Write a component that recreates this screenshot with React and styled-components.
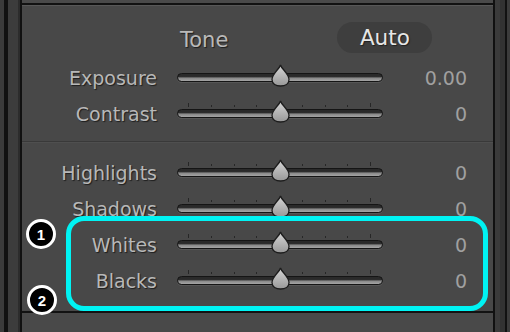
import React from "react";
import styled, { createGlobalStyle } from "styled-components";

const Global = createGlobalStyle`
  html, body { margin: 0; padding: 0; background: #3b3b3b; overflow: hidden; }
  body { font-family: "DejaVu Sans", "Liberation Sans", sans-serif; }
`;

const Frame = styled.div`
  position: relative;
  display: flex;
  width: 510px;
  height: 332px;
`;

const LeftRail = styled.div`
  width: 22px;
  background: linear-gradient(to right,
    #3b3b3b 0 4px, #111 4px 8px, #3c3c3c 8px 18px, #2c2c2c 18px 20px, #111 20px 22px);
`;

const RightRail = styled.div`
  width: 17px;
  background: linear-gradient(to right,
    #111 0 2px, #3b3b3b 2px 7px, #323232 7px 12px, #111 12px 14px, #3b3b3b 14px 17px);
`;

const Main = styled.div`
  flex: 1;
  display: flex;
  flex-direction: column;
  background: #494949;
`;

const TopStrip = styled.div`
  height: 3px;
  background: #4a4a4a;
`;

const Panel = styled.div`
  border-top: 2px solid #121212;
  border-bottom: 2px solid #121212;
  background: #484848;
  box-shadow: inset 0 1px 0 #585858;
`;

const Section = styled.div`
  display: flex;
  flex-direction: column;
  padding: ${(p) => p.$pad};
  border-bottom: ${(p) => (p.$divider ? "1px solid #393939" : "none")};
  box-shadow: ${(p) => (p.$divider ? "0 1px 0 #4f4f4f" : "none")};
`;

const Header = styled.div`
  display: flex;
  align-items: flex-start;
  height: 55px;
  box-sizing: border-box;
  padding: 17px 0 0 158px;
  gap: 109px;
`;

const Title = styled.div`
  font-size: 21px;
  line-height: 31px;
  padding-top: 3px;
  color: #b9b9b9;
  text-shadow: 1px 1px 1px rgba(0, 0, 0, 0.6);
`;

const AutoPill = styled.div`
  width: 95px;
  height: 31px;
  border-radius: 16px;
  background: #3e3e3e;
  color: #e6e6e6;
  font-size: 21.5px;
  line-height: 32px;
  text-align: center;
  text-shadow: 1px 1px 1px rgba(0, 0, 0, 0.5);
`;

const Row = styled.div`
  display: grid;
  grid-template-columns: 135px 206px 1fr;
  column-gap: 20px;
  padding-right: 26px;
  height: 36px;
  align-items: center;
`;

const Label = styled.div`
  text-align: right;
  font-size: 19px;
  color: #b8b8b8;
  text-shadow: 1px 1px 1px rgba(0, 0, 0, 0.6);
  white-space: nowrap;
`;

const Value = styled.div`
  text-align: right;
  font-size: 19px;
  color: #a0a0a0;
`;

const Slider = styled.div`
  position: relative;
  height: 36px;
`;

const Ticks = styled.div`
  position: absolute;
  top: 7px;
  left: 11px;
  right: 12px;
  display: flex;
  justify-content: space-between;
  align-items: flex-end;
  height: 4px;
`;

const Tick = styled.span`
  width: 1px;
  height: ${(p) => (p.$tall ? 4 : 2)}px;
  background: #262626;
`;

const Track = styled.div`
  position: absolute;
  top: 13px;
  left: 0;
  right: 0;
  height: 9px;
  box-sizing: border-box;
  border: 1.5px solid #151515;
  border-radius: 5px;
  background: linear-gradient(to bottom, #2a2a2a 0 35%, #8a8a8a 60%, #a4a4a4 100%);
  box-shadow: 0 1px 0 rgba(255, 255, 255, 0.08);
`;

const Thumb = styled.svg`
  position: absolute;
  top: 4px;
  left: 94px;
`;

function SliderControl({ ticks }) {
  return (
    <Slider>
      {ticks && (
        <Ticks>
          {Array.from({ length: 9 }).map((_, i) => (
            <Tick key={i} $tall={i === 0 || i === 8 || i === 4} />
          ))}
        </Ticks>
      )}
      <Track />
      <Thumb width="19" height="23" viewBox="0 0 19 23">
        <defs>
          <linearGradient id="tg" x1="0" y1="0" x2="0" y2="1">
            <stop offset="0" stopColor="#d6d6d6" />
            <stop offset="1" stopColor="#989898" />
          </linearGradient>
        </defs>
        <path
          d="M9.5 1 C10.5 5 18 9.5 18 15.5 C18 20 14 22 9.5 22 C5 22 1 20 1 15.5 C1 9.5 8.5 5 9.5 1 Z"
          fill="url(#tg)"
          stroke="#1c1c1c"
          strokeWidth="1.3"
        />
      </Thumb>
    </Slider>
  );
}

const Highlight = styled.div`
  position: absolute;
  left: 66px;
  top: 216px;
  width: 422px;
  height: 95px;
  box-sizing: border-box;
  border: 5px solid #00f3f3;
  border-radius: 18px;
`;

const Badge = styled.div`
  position: absolute;
  left: ${(p) => p.$x - 15}px;
  top: ${(p) => p.$y - 15}px;
  width: 30px;
  height: 30px;
  box-sizing: border-box;
  border: 3px solid #fff;
  border-radius: 50%;
  background: #000;
  color: #fff;
  font-family: "Liberation Sans", Arial, sans-serif;
  font-weight: bold;
  font-size: 15px;
  display: flex;
  align-items: center;
  justify-content: center;
`;

const toneRows = [
  { label: "Exposure", value: "0.00", ticks: false },
  { label: "Contrast", value: "0", ticks: true },
];

const presenceRows = [
  { label: "Highlights", value: "0" },
  { label: "Shadows", value: "0" },
  { label: "Whites", value: "0" },
  { label: "Blacks", value: "0" },
];

export default function App() {
  return (
    <>
      <Global />
      <Frame>
        <LeftRail />
        <Main>
          <TopStrip />
          <Panel>
            <Section $pad="0 0 9px 0" $divider>
              <Header>
                <Title>Tone</Title>
                <AutoPill>Auto</AutoPill>
              </Header>
              {toneRows.map((r) => (
                <Row key={r.label}>
                  <Label>{r.label}</Label>
                  <SliderControl ticks={r.ticks} />
                  <Value>{r.value}</Value>
                </Row>
              ))}
            </Section>
            <Section $pad="13px 0 12px 0">
              {presenceRows.map((r) => (
                <Row key={r.label}>
                  <Label>{r.label}</Label>
                  <SliderControl ticks />
                  <Value>{r.value}</Value>
                </Row>
              ))}
            </Section>
          </Panel>
        </Main>
        <RightRail />
        <Highlight />
        <Badge $x={41} $y={234}>1</Badge>
        <Badge $x={42} $y={300}>2</Badge>
      </Frame>
    </>
  );
}
